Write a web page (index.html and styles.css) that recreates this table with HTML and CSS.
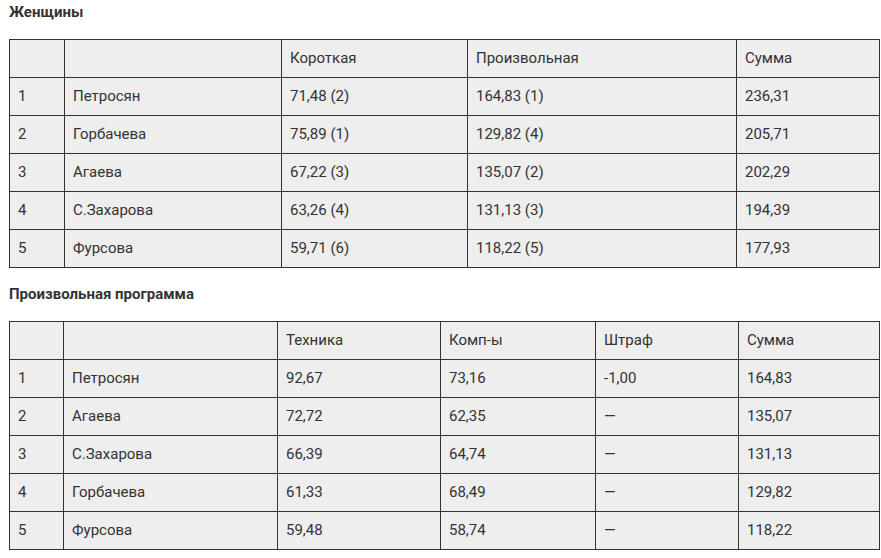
FILE: index.html
```html
<!DOCTYPE html>
<html lang="ru">
<head>
<meta charset="utf-8">
<link rel="stylesheet" href="styles.css">
</head>
<body>
<h3 class="title">Женщины</h3>
<table class="res res-a">
<colgroup><col class="a1"><col class="a2"><col class="a3"><col class="a4"><col class="a5"></colgroup>
<tr><td></td><td></td><td>Короткая</td><td>Произвольная</td><td>Сумма</td></tr>
<tr><td>1</td><td>Петросян</td><td>71,48 (2)</td><td>164,83 (1)</td><td>236,31</td></tr>
<tr><td>2</td><td>Горбачева</td><td>75,89 (1)</td><td>129,82 (4)</td><td>205,71</td></tr>
<tr><td>3</td><td>Агаева</td><td>67,22 (3)</td><td>135,07 (2)</td><td>202,29</td></tr>
<tr><td>4</td><td>С.Захарова</td><td>63,26 (4)</td><td>131,13 (3)</td><td>194,39</td></tr>
<tr><td>5</td><td>Фурсова</td><td>59,71 (6)</td><td>118,22 (5)</td><td>177,93</td></tr>
</table>
<h3 class="title">Произвольная программа</h3>
<table class="res res-b">
<colgroup><col class="b1"><col class="b2"><col class="b3"><col class="b4"><col class="b5"><col class="b6"></colgroup>
<tr><td></td><td></td><td>Техника</td><td>Комп-ы</td><td>Штраф</td><td>Сумма</td></tr>
<tr><td>1</td><td>Петросян</td><td>92,67</td><td>73,16</td><td>-1,00</td><td>164,83</td></tr>
<tr><td>2</td><td>Агаева</td><td>72,72</td><td>62,35</td><td>—</td><td>135,07</td></tr>
<tr><td>3</td><td>С.Захарова</td><td>66,39</td><td>64,74</td><td>—</td><td>131,13</td></tr>
<tr><td>4</td><td>Горбачева</td><td>61,33</td><td>68,49</td><td>—</td><td>129,82</td></tr>
<tr><td>5</td><td>Фурсова</td><td>59,48</td><td>58,74</td><td>—</td><td>118,22</td></tr>
</table>
</body>
</html>
```
FILE: styles.css
```css
html, body {
  margin: 0;
  background: #fff;
}
body {
  padding: 2px 9px 0 9px;
  font-family: Roboto, "Liberation Sans", sans-serif;
  font-size: 15px;
  color: #333;
}
.title {
  margin: 0 0 17px 0;
  font-size: 15px;
  line-height: 20px;
  font-weight: bold;
  color: #333;
}
.res {
  border-collapse: collapse;
  table-layout: fixed;
  width: 870px;
  margin: 0 0 16px 0;
}
.res td {
  background: #eee;
  border: 1px solid #333;
  padding: 8px 8px;
  height: 21px;
  line-height: 21px;
  vertical-align: middle;
  white-space: nowrap;
  box-sizing: content-box;
}
.a1 { width: 55px; }
.a2 { width: 217px; }
.a3 { width: 186px; }
.a4 { width: 269px; }
.a5 { width: 143px; }
.b1 { width: 54px; }
.b2 { width: 214px; }
.b3 { width: 163px; }
.b4 { width: 155px; }
.b5 { width: 143px; }
.b6 { width: 141px; }
```
